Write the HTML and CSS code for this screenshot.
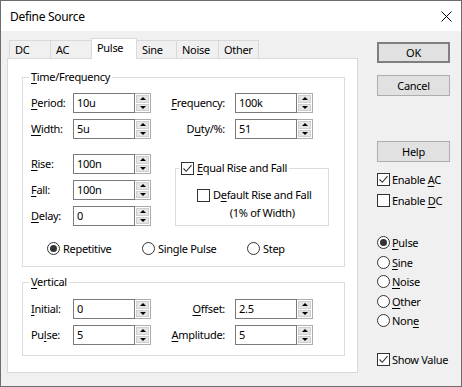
FILE: index.html
```html
<!DOCTYPE html>
<html lang="en">
<head>
    <meta charset="UTF-8">
    <title>Define Source</title>
    <link rel="stylesheet" href="styles.css">
</head>
<body>

    <div class="window">
        <div class="titlebar">
            <span class="title">Define Source</span>
            <svg class="close" viewBox="0 0 11 11"><path d="M0.5 0.5 L10.5 10.5 M10.5 0.5 L0.5 10.5"/></svg>
        </div>

        <div class="client">
            <div class="left">
                <div class="tabs">
                    <div class="tab tab-dc">DC</div>
                    <div class="tab tab-ac">AC</div>
                    <div class="tab tab-pulse active">Pulse</div>
                    <div class="tab tab-sine">Sine</div>
                    <div class="tab tab-noise">Noise</div>
                    <div class="tab tab-other">Other</div>
                </div>

                <div class="panel">
                    <fieldset class="group group-time">
                        <legend><u>T</u>ime/Frequency</legend>

                        <div class="fields fields-top">
                            <span class="label"><u>P</u>eriod:</span>
                            <div class="spinbox"><span class="value">10u</span><span class="spin"><i class="up"></i><i class="down"></i></span></div>
                            <span class="label label-right"><u>F</u>requency:</span>
                            <div class="spinbox"><span class="value">100k</span><span class="spin"><i class="up"></i><i class="down"></i></span></div>

                            <span class="label"><u>W</u>idth:</span>
                            <div class="spinbox"><span class="value">5u</span><span class="spin"><i class="up"></i><i class="down"></i></span></div>
                            <span class="label label-right">D<u>u</u>ty/%:</span>
                            <div class="spinbox"><span class="value">51</span><span class="spin"><i class="up"></i><i class="down"></i></span></div>
                        </div>

                        <div class="mid">
                            <div class="fields fields-left">
                                <span class="label"><u>R</u>ise:</span>
                                <div class="spinbox"><span class="value">100n</span><span class="spin"><i class="up"></i><i class="down"></i></span></div>
                                <span class="label"><u>F</u>all:</span>
                                <div class="spinbox"><span class="value">100n</span><span class="spin"><i class="up"></i><i class="down"></i></span></div>
                                <span class="label"><u>D</u>elay:</span>
                                <div class="spinbox"><span class="value">0</span><span class="spin"><i class="up"></i><i class="down"></i></span></div>
                            </div>

                            <fieldset class="group-equal">
                                <legend>
                                    <span class="option">
                                        <span class="check"><svg viewBox="0 0 11 11"><path d="M1.5 5.5 L4.3 8.3 L9.5 2.2"/></svg></span>
                                        <span><u>E</u>qual Rise and Fall</span>
                                    </span>
                                </legend>
                                <div class="default-row">
                                    <span class="check"></span>
                                    <span class="default-text">D<u>e</u>fault Rise and Fall<br>(1% of Width)</span>
                                </div>
                            </fieldset>
                        </div>

                        <div class="radio-row">
                            <span class="option"><span class="radio on"></span><span>Repetitive</span></span>
                            <span class="option"><span class="radio"></span><span>Single Pulse</span></span>
                            <span class="option"><span class="radio"></span><span>Step</span></span>
                        </div>
                    </fieldset>

                    <fieldset class="group group-vertical">
                        <legend><u>V</u>ertical</legend>

                        <div class="fields fields-top">
                            <span class="label"><u>I</u>nitial:</span>
                            <div class="spinbox"><span class="value">0</span><span class="spin"><i class="up"></i><i class="down"></i></span></div>
                            <span class="label label-right"><u>O</u>ffset:</span>
                            <div class="spinbox"><span class="value">2.5</span><span class="spin"><i class="up"></i><i class="down"></i></span></div>

                            <span class="label">Pu<u>l</u>se:</span>
                            <div class="spinbox"><span class="value">5</span><span class="spin"><i class="up"></i><i class="down"></i></span></div>
                            <span class="label label-right"><u>A</u>mplitude:</span>
                            <div class="spinbox"><span class="value">5</span><span class="spin"><i class="up"></i><i class="down"></i></span></div>
                        </div>
                    </fieldset>
                </div>
            </div>

            <div class="right">
                <div class="btn default">OK</div>
                <div class="btn btn-cancel">Cancel</div>
                <div class="btn btn-help">Help</div>

                <div class="side-checks">
                    <span class="option side-row"><span class="check"><svg viewBox="0 0 11 11"><path d="M1.5 5.5 L4.3 8.3 L9.5 2.2"/></svg></span><span>Enable <u>A</u>C</span></span>
                    <span class="option side-row"><span class="check"></span><span>Enable <u>D</u>C</span></span>
                </div>

                <div class="side-radios">
                    <span class="option radio-item"><span class="radio on"></span><span><u>P</u>ulse</span></span>
                    <span class="option radio-item"><span class="radio"></span><span><u>S</u>ine</span></span>
                    <span class="option radio-item"><span class="radio"></span><span><u>N</u>oise</span></span>
                    <span class="option radio-item"><span class="radio"></span><span><u>O</u>ther</span></span>
                    <span class="option radio-item"><span class="radio"></span><span>Non<u>e</u></span></span>
                </div>

                <span class="option side-row show-value"><span class="check"><svg viewBox="0 0 11 11"><path d="M1.5 5.5 L4.3 8.3 L9.5 2.2"/></svg></span><span>Show Value</span></span>
            </div>
        </div>
    </div>

</body>
</html>
```

FILE: styles.css
```css
* {
    box-sizing: border-box;
}

body {
    margin: 0;
    font-family: "Noto Sans", "Segoe UI", sans-serif;
    font-size: 11px;
    letter-spacing: -0.3px;
    color: #000;
    background-color: #fff;
}

u {
    text-decoration-thickness: 1px;
    text-underline-offset: 2px;
}

.window {
    width: 462px;
    height: 387px;
    border: 1px solid #6d6d6d;
    display: flex;
    flex-direction: column;
    background-color: #f0f0f0;
}

/* Title bar */
.titlebar {
    height: 30px;
    flex: none;
    background-color: #fff;
    display: flex;
    align-items: center;
    justify-content: space-between;
    padding: 0 9px;
}

.title {
    font-size: 12px;
}

.close {
    width: 11px;
    height: 11px;
}

.close path {
    stroke: #000;
    stroke-width: 1;
    fill: none;
}

.client {
    flex: 1;
    display: flex;
}

/* Tabs + panel */
.left {
    width: 357px;
    padding: 7px 0 0 6px;
}

.tabs {
    display: flex;
    align-items: flex-end;
    height: 20px;
    margin-left: 2px;
}

.tab {
    height: 18px;
    border: 1px solid #d9d9d9;
    border-bottom: none;
    margin-right: -1px;
    padding-left: 5px;
    line-height: 17px;
    background-color: #f0f0f0;
}

.tab.active {
    height: 21px;
    margin-bottom: -1px;
    line-height: 18px;
    background-color: #fff;
    position: relative;
    z-index: 1;
}

.tab-dc { width: 42px; }
.tab-ac { width: 42px; }
.tab-pulse { width: 46px; }
.tab-sine { width: 41px; }
.tab-noise { width: 43px; }
.tab-other { width: 41px; }

.panel {
    width: 351px;
    height: 315px;
    border: 1px solid #d9d9d9;
    background-color: #fff;
    padding-top: 11px;
}

/* Group boxes */
.group {
    width: 323px;
    margin: 0 0 0 14px;
    padding: 0;
    border: 1px solid #dcdcdc;
    min-inline-size: 0;
}

.group > legend {
    margin-left: 6px;
    padding: 0 2px;
    line-height: 14px;
}

.group-time {
    height: 197px;
}

.group-vertical {
    height: 81px;
    margin-top: 8px;
}

.fields {
    display: grid;
    grid-auto-rows: 20px;
    row-gap: 6px;
    padding-left: 8px;
}

.fields-top {
    grid-template-columns: 42px 78px 84px 78px;
    margin-top: 9px;
}

.group-vertical .fields-top {
    margin-top: 10px;
}

.fields-left {
    grid-template-columns: 42px 78px;
    width: 152px;
}

.label {
    line-height: 20px;
    white-space: nowrap;
}

.label-right {
    text-align: right;
    padding-right: 10px;
}

/* Spin box */
.spinbox {
    display: flex;
    height: 20px;
}

.value {
    width: 62px;
    border: 1px solid #7a7a7a;
    padding-left: 3px;
    line-height: 18px;
    background-color: #fff;
}

.spin {
    width: 16px;
    border: 1px solid #adadad;
    border-left: none;
    padding: 1px;
    display: flex;
    flex-direction: column;
    gap: 1px;
    background-color: #fff;
}

.spin i {
    flex: 1;
    display: flex;
    align-items: center;
    justify-content: center;
    background-color: #e5e5e5;
    border: 1px solid #cfcfcf;
}

.spin i::before {
    content: "";
    border-left: 3px solid transparent;
    border-right: 3px solid transparent;
}

.spin .up::before {
    border-bottom: 3px solid #000;
}

.spin .down::before {
    border-top: 3px solid #000;
}

/* Equal rise/fall box */
.mid {
    display: flex;
    margin-top: 15px;
}

.group-equal {
    width: 154px;
    height: 65px;
    margin: 7px 0 0 0;
    padding: 0;
    border: 1px solid #dcdcdc;
    min-inline-size: 0;
}

.group-equal > legend {
    margin-left: 3px;
    padding: 0 2px;
    line-height: 14px;
}

.default-row {
    display: flex;
    margin: 9px 0 0 21px;
}

.default-row .check {
    margin-top: 3px;
}

.default-text {
    margin-left: 3px;
    line-height: 18px;
    text-align: center;
}

/* Checkbox / radio */
.option {
    display: inline-flex;
    align-items: center;
    gap: 3px;
    white-space: nowrap;
}

.check {
    width: 13px;
    height: 13px;
    flex: none;
    border: 1px solid #333;
    background-color: #fff;
    display: inline-flex;
}

.check svg {
    width: 11px;
    height: 11px;
}

.check path {
    stroke: #333;
    stroke-width: 1.1;
    fill: none;
}

.radio {
    width: 13px;
    height: 13px;
    flex: none;
    border: 1px solid #333;
    border-radius: 50%;
    background-color: #fff;
    display: inline-flex;
    align-items: center;
    justify-content: center;
}

.radio.on::after {
    content: "";
    width: 7px;
    height: 7px;
    border-radius: 50%;
    background-color: #333;
}

.radio-row {
    display: grid;
    grid-template-columns: 95px 105px auto;
    height: 14px;
    margin: 15px 0 0 24px;
}

/* Right column */
.right {
    width: 73px;
    margin-left: 19px;
    padding-top: 11px;
    display: flex;
    flex-direction: column;
}

.btn {
    height: 21px;
    border: 1px solid #adadad;
    background-color: #e1e1e1;
    text-align: center;
    line-height: 19px;
}

.btn.default {
    border: 2px solid #7f7f7f;
    line-height: 17px;
}

.btn-cancel {
    margin-top: 12px;
}

.btn-help {
    margin-top: 45px;
}

.side-checks {
    margin-top: 7px;
    display: flex;
    flex-direction: column;
}

.side-row {
    height: 21px;
    gap: 2px;
}

.side-radios {
    margin-top: 22px;
    display: flex;
    flex-direction: column;
}

.radio-item {
    height: 19.5px;
    gap: 2px;
}

.show-value {
    margin-top: 18px;
}
```
